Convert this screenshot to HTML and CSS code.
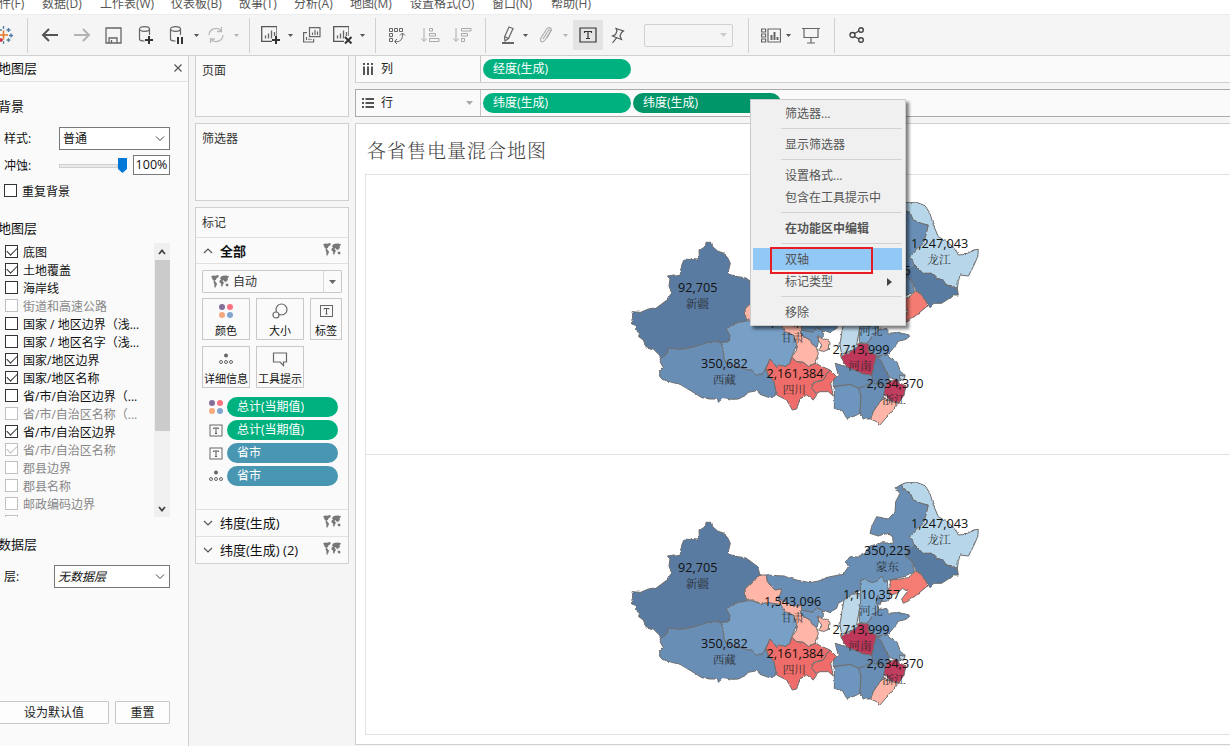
FILE: index.html
```html
<!DOCTYPE html>
<html lang="zh-CN">
<head>
<meta charset="utf-8">
<title>各省售电量混合地图</title>
<link rel="stylesheet" href="styles.css">
</head>
<body>
<svg class="defs" width="0" height="0" aria-hidden="true">
  <defs>
    <filter id="coast" x="0" y="0" width="100%" height="100%" color-interpolation-filters="sRGB">
      <feTurbulence type="fractalNoise" baseFrequency="0.06" numOctaves="2" seed="4"/>
      <feDisplacementMap in="SourceGraphic" scale="8" xChannelSelector="R" yChannelSelector="G"/>
    </filter>
    <symbol id="world" viewBox="0 0 18 14">
      <path fill="#777" d="M0 1.500L2 .5 4.500 .8 6.500 0 8 .8 7 2.500 5.500 3.200 5 5 3.500 5.500 5 7.500 6 8.500 5.500 10.500 4.500 12 4.200 13.500 3.500 12 3.300 9 2.500 7 3 6 1.500 4.500 1 2.700zM9 3.500L10 1.500 12 .8 15 .6 18 1.200 17.500 2.500 16.500 3 17 5 15.500 6 15 7.500 14 6.200 13 6.500 12.500 5 11.500 5.500 12.200 7 13 7.500 12 9.500 11 12 10.200 11 10 8.500 8.500 7.500 8.600 5.500 10 4.800zM14.500 9L16.500 8.500 17.500 10 17 11.500 15 11z"/>
    </symbol>
    <symbol id="tbox" viewBox="0 0 13 13"><rect x=".5" y="1" width="12" height="11" fill="none" stroke="#666"/><path d="M4 5V4h5v1M6.500 4v5.500M5.500 9.500h2" fill="none" stroke="#555"/></symbol>
    <symbol id="dots4" viewBox="0 0 16 16"><circle cx="4" cy="4" r="3" fill="#85709a"/><circle cx="12" cy="4" r="3" fill="#fb7380"/><circle cx="4" cy="12" r="3" fill="#f5a87c"/><circle cx="12" cy="12" r="3" fill="#82a5ce"/></symbol>
    <symbol id="detail" viewBox="0 0 14 12"><circle cx="7" cy="2.500" r="2" fill="#666"/><g fill="none" stroke="#666"><circle cx="2" cy="9" r="1.500"/><circle cx="7" cy="9" r="1.500"/><circle cx="12" cy="9" r="1.500"/></g></symbol>
    <symbol id="chart" viewBox="0 0 16 16"><path d="M16 10V.7H.7v14.600H11" fill="none" stroke="#555" stroke-width="1.300"/><path d="M4.500 12.500v-3M7.500 12.500v-5M10.500 12.500v-8M13.500 10V6" stroke="#666" stroke-width="1.300"/></symbol>
    <symbol id="caret" viewBox="0 0 5 3"><path d="M0 0h5L2.500 3z"/></symbol>
    <symbol id="china" viewBox="0 0 1110 720">
      <g filter="url(#coast)" stroke="#6d6d6d" stroke-width="3" stroke-linejoin="round">
        <path fill="#597ba2" d="M258 142L275 142 278 155 293 168 312 175 324 190 331 205 326 225 325 238 355 245 378 249 400 265 413 275 420 300 400 318 383 332 375 342 378 378 345 385 318 402 330 420 328 440 308 443 275 438 240 450 205 460 175 463 147 458 140 478 125 490 113 475 100 462 78 455 70 435 56 425 58 415 47 405 48 395 33 385 38 370 36 350 62 352 85 342 110 338 145 312 154 292 147 272 150 252 142 243 180 238 186 208 193 192 232 195 238 188 237 165 257 152z"/>
        <path fill="#688eb5" d="M147 458L175 463 205 460 240 450 275 438 308 443 305 455 310 470 312 490 320 505 340 512 370 518 395 527 410 538 425 537 438 522 445 540 462 560 468 590 465 603 445 607 420 598 410 587 385 592 375 602 355 612 335 613 310 608 295 622 293 612 270 612 245 608 225 595 200 580 180 568 155 562 125 552 118 530 130 518 120 500 125 490 140 478z"/>
        <path fill="#789fc5" d="M378 378L395 377 425 387 440 380 480 385 495 405 510 410 525 425 530 450 515 487 510 505 495 515 478 510 470 518 462 505 450 492 442 510 438 522 425 537 410 538 395 527 340 512 320 505 312 490 310 470 305 455 308 443 328 440 330 420 318 402 345 385z"/>
        <path fill="#688eb5" d="M438 300L490 303 530 315 570 323 595 318 630 305 670 298 685 275 678 260 690 245 715 246 735 235 745 215 785 203 820 205 818 188 810 175 790 178 775 183 750 175 755 155 770 125 805 132 825 110 827 80 840 55 825 40 845 28 850 45 870 52 880 75 905 85 925 90 918 120 910 145 890 165 868 185 885 210 865 225 858 245 880 262 883 290 850 305 812 315 795 320 785 303 770 320 745 320 735 310 720 320 723 345 695 358 672 375 655 385 650 400 628 412 607 405 590 398 580 412 545 408 540 390 525 395 495 380 473 370 482 355 485 342 465 345 450 330 442 320z"/>
        <path fill="#ffb6a8" d="M420 300L438 300 442 320 450 330 465 345 485 342 482 355 473 370 495 380 525 395 540 390 545 420 570 435 588 455 595 475 585 505 565 515 550 502 530 500 515 487 530 465 530 445 520 420 495 410 480 388 440 382 425 388 400 375 378 375 375 342 400 318z"/>
        <path fill="#7298bf" d="M540 405L580 412 590 398 607 405 610 422 597 430 592 455 585 455 570 435 545 420z"/>
        <path fill="#ffb6a8" d="M595 425L607 428 630 442 628 462 610 470 595 465 605 450 595 435z"/>
        <path fill="#b8d6ea" d="M845 28L865 22 890 22 915 32 930 55 940 90 955 125 980 140 1005 160 1015 180 1040 178 1060 165 1075 163 1073 185 1060 215 1045 243 1020 240 1015 260 1012 280 1000 275 980 270 970 255 950 250 935 235 910 235 890 215 868 187 890 165 910 145 918 120 925 90 905 85 880 75 870 52 850 45z"/>
        <path fill="#587ba1" d="M885 210L910 235 935 235 950 250 970 255 980 270 1000 275 1012 280 1015 300 1000 300 985 312 965 325 945 325 930 338 918 318 905 300 888 287 880 262 858 245 865 225z"/>
        <path fill="#f47c73" d="M888 287L905 300 918 318 920 335 890 360 865 378 850 385 845 372 862 350 848 340 830 355 812 360 808 350 812 315 840 312 865 308z"/>
        <path fill="#80abd0" d="M802 318L805 350 810 365 802 378 785 380 772 390 778 405 755 425 745 445 718 442 718 405 722 380 722 345 720 320 735 310 745 320 770 320 785 303 795 320z"/>
        <path fill="#5f87af" d="M773 360L785 375 780 390 768 385z"/>
        <path fill="#bcd8e9" d="M672 375L695 358 720 355 722 380 718 405 712 440 705 462 665 478 660 450 665 415z"/>
        <path fill="#6b93bb" d="M778 405L800 400 806 415 835 412 868 420 860 432 835 440 820 460 802 480 772 482 748 470 745 445 755 425z"/>
        <path fill="#688eb5" d="M645 505L680 515 715 530 755 540 770 565 755 570 715 580 690 568 640 575 640 555 655 540z"/>
        <path fill="#5b7fa7" d="M765 484L775 484 785 500 798 530 808 548 800 570 792 600 765 580 755 540z"/>
        <path fill="#bd385b" d="M715 445L745 447 745 468 770 482 765 498 755 540 738 538 715 530 680 515 662 485 705 462z"/>
        <path fill="#7298bf" d="M802 480L830 500 840 525 855 545 840 558 810 548 798 530 785 500 772 484z"/>
        <path fill="#6d95bd" d="M643 575L690 568 715 580 723 600 720 655 700 665 680 670 668 648 643 640 643 610z"/>
        <path fill="#688eb5" d="M715 580L755 565 790 570 800 590 780 620 760 650 752 672 730 672 720 655 723 600z"/>
        <path fill="#c13d5f" d="M795 580L805 560 830 552 840 565 858 572 852 600 835 625 812 618 792 595z"/>
        <path fill="#ffb6a8" d="M792 610L812 618 835 625 815 652 795 672 778 692 770 680 752 672 760 650 780 620z"/>
        <path fill="#b8d6ea" d="M838 540L855 545 850 556 840 552z"/>
        <path fill="#ee6c69" d="M450 492L462 505 470 518 478 510 495 515 510 505 515 487 530 500 550 502 565 515 585 505 600 512 630 525 610 555 580 562 578 580 590 600 580 615 560 600 540 612 530 642 517 645 500 615 470 600 468 590 462 560 445 540 438 522z"/>
        <path fill="#ee6c69" d="M630 525L650 545 632 565 640 603 625 590 600 590 590 595 575 580 580 565 610 555z"/>
      </g>
      <g class="num" text-anchor="middle">
        <text x="233" y="291">92,705</text><text x="313" y="519">350,682</text><text x="518" y="394">1,543,096</text><text x="525" y="549">2,161,384</text><text x="959" y="160">1,247,043</text><text x="802" y="240">350,225</text><text x="755" y="372">1,110,357</text><text x="723" y="477">2,713,999</text><text x="825" y="580">2,634,370</text>
      </g>
      <g class="prov" text-anchor="middle">
        <text x="232" y="340">新疆</text><text x="313" y="567">西藏</text><text x="517" y="441">甘肃</text><text x="523" y="597">四川</text><text x="957" y="208">龙江</text><text x="802" y="287">蒙东</text><text x="753" y="421">河北</text><text x="720" y="525">河南</text><text x="822" y="626">浙江</text>
      </g>
    </symbol>
  </defs>
</svg>

<nav class="menubar"><span class="cut">件(F)</span><span>数据(D)</span><span>工作表(W)</span><span>仪表板(B)</span><span>故事(T)</span><span>分析(A)</span><span>地图(M)</span><span>设置格式(O)</span><span>窗口(N)</span><span>帮助(H)</span></nav>

<div class="toolbar">
  <svg width="13" height="18" fill="none" stroke-width="1.300"><path stroke="#e8762c" stroke-width="1.600" d="M-1 9h9M3.500 4.500v9"/><path stroke="#4e79a7" d="M6.500 4h4M8.500 2v4M9 9.500h4M11 7.500v4M3.500 0v3"/><path stroke="#c72035" d="M-1 14h4M1 12v4"/><path stroke="#59879b" d="M6.500 14h4M8.500 12v4M-1 4h3M3.500 15v3"/></svg>
  <i class="sep"></i>
  <svg width="18" height="14" fill="none" stroke="#555" stroke-width="2"><path d="M17 7H2M8 1L2 7l6 6"/></svg>
  <svg width="18" height="14" fill="none" stroke="#b3b3b3" stroke-width="2"><path d="M1 7h15M10 1l6 6-6 6"/></svg>
  <svg width="17" height="17" fill="none" stroke="#666" stroke-width="1.300"><path d="M1 1h15v15H1zM4 16v-5h8v5M6.500 16v-3"/></svg>
  <svg width="16" height="18" fill="none" stroke="#666" stroke-width="1.200"><ellipse cx="6.500" cy="3" rx="5" ry="2.300"/><path d="M1.500 3v10c0 1 2 2 5 2M11.500 3v6"/><path stroke="#333" stroke-width="2" d="M7 14h8M11 10v8"/></svg>
  <svg width="16" height="18" fill="none" stroke="#666" stroke-width="1.200"><ellipse cx="6.500" cy="3" rx="5" ry="2.300"/><path d="M1.500 3v10c0 1 2 2 5 2M11.500 3v6"/><path stroke="#333" stroke-width="2" d="M9 11v7M13 11v7"/></svg>
  <svg class="caret"><use href="#caret"/></svg>
  <svg width="18" height="16" fill="none" stroke="#b9b9b9" stroke-width="1.300"><path d="M2 8a7 7 0 0 1 12-4.500M16 8a7 7 0 0 1-12 4.500M14.500 0v4.500H10M3.500 16v-4H8"/></svg>
  <svg class="caret dim"><use href="#caret"/></svg>
  <i class="sep"></i>
  <svg width="20" height="18"><use href="#chart" x="1" y="0" width="16" height="16"/><path stroke="#333" stroke-width="2" d="M12 14h8M16 10v8"/></svg>
  <svg class="caret"><use href="#caret"/></svg>
  <svg width="18" height="16" fill="none" stroke="#666" stroke-width="1.200"><path d="M6.500.6h10.500v9H6.500zM4 5.600H.6V15h10v-3M3.500 13v-3M6 13v-1.500M8 13v-1M9.500 8V5.500M12 8V3M14.500 8V4.500"/></svg>
  <svg width="20" height="18"><use href="#chart" x="0" y="0" width="16" height="16"/><path stroke="#333" stroke-width="2" d="M12 11l6.500 6.500M18.500 11L12 17.500"/></svg>
  <svg class="caret"><use href="#caret"/></svg>
  <i class="sep"></i>
  <svg width="18" height="17" fill="none" stroke="#666"><path d="M1.500 1.500h3v3h-3zM6.500 1.500h3v3h-3zM11.500 1.500h3v3h-3zM1.500 6.500h3v3h-3zM1.500 11.500h3v3h-3zM7 14.500c5 1 8-2 7.500-8M12 8.500l2.500-2.500L17 8.500M9 12l-2.500 2.500L9 17"/></svg>
  <svg width="19" height="16" fill="none" stroke="#aaa"><path d="M3 1v13M.5 11.500L3 14.500l2.500-3M8.500 1.500h3v2.500h-3zM8.500 6.500h6v2.500h-6zM8.500 11.500h9.500v3H8.500z"/></svg>
  <svg width="19" height="16" fill="none" stroke="#aaa"><path d="M3 1v13M.5 11.500L3 14.500l2.500-3M8.500 1.500H18V4H8.500zM8.500 6.500h6v2.500h-6zM8.500 11.500h3v3h-3z"/></svg>
  <i class="sep"></i>
  <svg width="15" height="18" fill="none" stroke="#666" stroke-width="1.200"><path d="M8 1l4 1.500-4.500 10L4 15l-.5-4zM3.500 10.500l4 2M6 4"/><path d="M1 17h12" stroke-width="2"/></svg>
  <svg class="caret"><use href="#caret"/></svg>
  <svg width="15" height="16" fill="none" stroke="#b0b0b0" stroke-width="1.200"><path d="M5 12l5-8c1-2 3-1 2 1L7 13c-2 3-6 2-4-2l5-8c2-4 7-2 5 1l-4 7"/></svg>
  <svg class="caret dim"><use href="#caret"/></svg>
  <span class="toggle"><svg width="18" height="16" fill="none" stroke="#333" stroke-width="1.200"><path d="M1 1h16v14H1zM5.500 6V4.500h7V6M9 4.500v7M7 11.500h4"/></svg></span>
  <svg width="14" height="17" fill="none" stroke="#555" stroke-width="1.200"><path d="M5 1.500L12.500 4 10.500 5.500 9 9l1.500 3.500L1.500 9 4.500 7.500 6 4zM5.500 10.800L1.500 16"/></svg>
  <span class="combo"><svg width="7" height="4" fill="#ccc"><path d="M0 0h7L3.500 4z"/></svg></span>
  <i class="sep"></i>
  <svg width="20" height="15" fill="none" stroke="#666" stroke-width="1.200"><path d="M.6 1h4v3h-4zM.6 6h4v3h-4zM.6 11h4v3h-4zM7 1h12.500v13H7z"/><path stroke-width="2" d="M10.500 12V7M13.500 12V4M16.500 12V9"/></svg>
  <svg class="caret"><use href="#caret"/></svg>
  <svg width="18" height="17" fill="none" stroke="#666" stroke-width="1.200"><path d="M0 1.500h18M2 2v8.500h14V2M9 10.500V16M5 16h8"/></svg>
  <i class="sep"></i>
  <svg width="16" height="16" fill="none" stroke="#444" stroke-width="1.400"><circle cx="3.500" cy="8" r="2.500"/><circle cx="12" cy="3" r="2.300"/><circle cx="12" cy="13" r="2.300"/><path d="M5.500 6.500l4.500-2.500M5.500 9.500l4.500 2.500"/></svg>
</div>

<div class="main">
  <aside class="layers">
    <div class="layers-head"><b>地图层</b><svg width="8" height="8" stroke="#555" stroke-width="1.200"><path d="M.5.500l7 7M7.500.500l-7 7"/></svg></div>
    <h2 class="h-bg">背景</h2>
    <div class="field"><label>样式:</label><span class="select w111">普通<svg width="10" height="6" fill="none" stroke="#444"><path d="M1 .5l4 4 4-4"/></svg></span></div>
    <div class="field erode"><label>冲蚀:</label><span class="track"></span><svg class="thumb" width="9" height="15"><path fill="#0078d7" d="M0 0h9v11l-4.500 4L0 11z"/></svg><span class="pct">100%</span></div>
    <div class="check repeat"><i class="box"></i><span>重复背景</span></div>
    <h2 class="h-layer">地图层</h2>
    <div class="list">
      <div class="rows">
        <div class="check"><i class="box on"></i><span>底图</span></div>
        <div class="check"><i class="box on"></i><span>土地覆盖</span></div>
        <div class="check"><i class="box"></i><span>海岸线</span></div>
        <div class="check off"><i class="box"></i><span>街道和高速公路</span></div>
        <div class="check"><i class="box"></i><span>国家 / 地区边界（浅...</span></div>
        <div class="check"><i class="box"></i><span>国家 / 地区名字（浅...</span></div>
        <div class="check"><i class="box on"></i><span>国家/地区边界</span></div>
        <div class="check"><i class="box on"></i><span>国家/地区名称</span></div>
        <div class="check"><i class="box"></i><span>省/市/自治区边界（...</span></div>
        <div class="check off"><i class="box"></i><span>省/市/自治区名称（...</span></div>
        <div class="check"><i class="box on"></i><span>省/市/自治区边界</span></div>
        <div class="check off"><i class="box on"></i><span>省/市/自治区名称</span></div>
        <div class="check off"><i class="box"></i><span>郡县边界</span></div>
        <div class="check off"><i class="box"></i><span>郡县名称</span></div>
        <div class="check off"><i class="box"></i><span>邮政编码边界</span></div>
        <div class="check off"><i class="box"></i></div>
      </div>
      <div class="scroll"><svg width="8" height="6" fill="none" stroke="#444" stroke-width="1.800"><path d="M1 5l3-3.500L7 5"/></svg><i></i><svg width="8" height="6" fill="none" stroke="#444" stroke-width="1.800"><path d="M1 1l3 3.500L7 1"/></svg></div>
    </div>
    <h2 class="h-data">数据层</h2>
    <div class="field"><label class="short">层:</label><span class="select w116"><em>无数据层</em><svg width="10" height="6" fill="none" stroke="#444"><path d="M1 .5l4 4 4-4"/></svg></span></div>
    <div class="actions"><button class="default">设为默认值</button><button class="reset">重置</button></div>
  </aside>

  <section class="cards">
    <div class="card pages">页面</div>
    <div class="card filters">筛选器</div>
    <div class="card marks">
      <div class="marks-title">标记</div>
      <div class="mark-row all"><svg width="10" height="6" fill="none" stroke="#555" stroke-width="1.200"><path d="M1 5l4-4 4 4"/></svg><b>全部</b><svg class="world" width="18" height="14"><use href="#world"/></svg></div>
      <div class="mark-type"><svg width="18" height="14"><use href="#world"/></svg><span>自动</span><i><svg width="7" height="4" fill="#666"><path d="M0 0h7L3.500 4z"/></svg></i></div>
      <div class="mark-btns">
        <div><svg width="16" height="16"><use href="#dots4"/></svg>颜色</div>
        <div><svg width="16" height="16" fill="none" stroke="#666" stroke-width="1.200"><circle cx="9.500" cy="6.500" r="5.500"/><circle cx="4" cy="12" r="3" fill="#fafafa"/></svg>大小</div>
        <div><svg width="13" height="16"><use href="#tbox"/></svg>标签</div>
        <div><svg width="14" height="16"><use href="#detail"/></svg>详细信息</div>
        <div><svg width="16" height="16" fill="none" stroke="#666" stroke-width="1.200"><path d="M1.500 2h13v9h-3v3.500L8 11H1.500z"/></svg>工具提示</div>
      </div>
      <div class="encodings">
        <div><svg width="16" height="16"><use href="#dots4"/></svg><span class="pill green">总计(当期值)</span></div>
        <div><svg width="16" height="13"><use href="#tbox"/></svg><span class="pill green">总计(当期值)</span></div>
        <div><svg width="16" height="13"><use href="#tbox"/></svg><span class="pill blue">省市</span></div>
        <div><svg width="16" height="12"><use href="#detail"/></svg><span class="pill blue">省市</span></div>
      </div>
      <div class="mark-row lat"><svg width="10" height="6" fill="none" stroke="#555" stroke-width="1.200"><path d="M1 1l4 4 4-4"/></svg><span>纬度(生成)</span><svg class="world" width="18" height="14"><use href="#world"/></svg></div>
      <div class="mark-row lat"><svg width="10" height="6" fill="none" stroke="#555" stroke-width="1.200"><path d="M1 1l4 4 4-4"/></svg><span>纬度(生成) (2)</span><svg class="world" width="18" height="14"><use href="#world"/></svg></div>
    </div>
  </section>

  <section class="work">
    <div class="shelf cols"><div class="shelf-name"><svg width="12" height="12" stroke="#555" stroke-width="2"><path d="M2 0v2M6 0v2M10 0v2M2 3.500V12M6 3.500V12M10 3.500V12"/></svg>列</div><span class="pill green">经度(生成)</span></div>
    <div class="shelf rows-shelf"><div class="shelf-name"><svg width="12" height="12" stroke="#555" stroke-width="2"><path d="M0 2h2M0 6h2M0 10h2M3.500 2H12M3.500 6H12M3.500 10H12"/></svg>行<svg class="drop" width="7" height="4" fill="#aaa"><path d="M0 0h7L3.500 4z"/></svg></div><span class="pill green">纬度(生成)</span><span class="pill dark">纬度(生成)</span></div>
    <div class="viz">
      <h1>各省售电量混合地图</h1>
      <div class="panes">
        <div class="pane"><svg width="370" height="240"><use href="#china"/></svg></div>
        <div class="pane"><svg width="370" height="240"><use href="#china"/></svg></div>
      </div>
    </div>
  </section>
</div>

<div class="menu">
  <div>筛选器...</div><hr>
  <div>显示筛选器</div><hr>
  <div>设置格式...</div>
  <div>包含在工具提示中</div><hr>
  <div class="bold">在功能区中编辑</div><hr>
  <div class="active">双轴</div>
  <div>标记类型<svg width="5" height="8" fill="#444"><path d="M0 0l5 4-5 4z"/></svg></div><hr>
  <div>移除</div>
  <span class="frame"></span>
</div>
</body>
</html>
```
FILE: styles.css
```css
* { box-sizing: border-box; }
body { margin: 0; width: 1230px; height: 746px; overflow: hidden; position: relative; background: #f5f5f5; color: #222; font: 12px/18px "Open Sans", "Noto Sans CJK SC", sans-serif; white-space: nowrap; }
svg { display: block; flex: none; }
i { font-style: normal; }
.defs { position: absolute; }

.menubar { height: 14px; background: #fff; color: #555; display: grid; grid-template-columns: 42px 58px 71px 68px 55px 56px 60px 82px 59px 60px; line-height: 18px; }
.menubar span { margin-top: -5px; }
.menubar .cut { margin-left: -1px; }

.toolbar { height: 42px; border-top: 1px solid #ececec; border-bottom: 1px solid #d0d0d0; display: grid; align-items: center; grid-template-columns: 27px 14px 32px 32px 33px 31px 25px 13px 27px 15px 11px 28px 15px 30px 27px 15px 13px 33px 32px 32px 16px 22px 15px 25px 10px 38px 33px 104px 13px 25px 16px 32px 15px 40px; }
.sep { width: 1px; height: 35px; background: #d0d0d0; }
.caret { width: 5px; height: 3px; fill: #555; }
.caret.dim { fill: #b5b5b5; }
.toggle { width: 30px; height: 30px; background: #e4e4e4; display: grid; place-items: center; }
.combo { width: 89px; height: 23px; border: 1px solid #d0d0d0; border-radius: 2px; display: flex; align-items: center; justify-content: flex-end; padding-right: 5px; }

.main { display: grid; grid-template-columns: 189px 166px 875px; height: 690px; }

.layers { background: #fafafa; border-right: 1px solid #d0d0d0; display: flex; flex-direction: column; color: #111; }
.layers-head { height: 26px; flex: none; border-bottom: 1px solid #e2e2e2; display: flex; align-items: center; justify-content: space-between; padding: 0 6px 1px 0; }
.layers-head b, .layers h2 { font-weight: normal; font-size: 13px; margin: 0 0 0 -2px; }
.layers h2 { flex: none; display: flex; align-items: center; }
.h-bg { height: 45px; padding-top: 2px; }
.h-layer { height: 43px; padding-top: 12px; }
.h-data { height: 47px; padding-top: 4px; }
.field { height: 23px; flex: none; display: flex; align-items: center; padding-left: 4px; }
.field label { width: 55px; }
.field .short { width: 50px; }
.select { height: 23px; background: #fff; border: 1px solid #777; display: flex; align-items: center; justify-content: space-between; padding: 0 4px 0 3px; }
.w111 { width: 111px; }
.w116 { width: 116px; }
.erode { margin-top: 5px; height: 21px; }
.track { width: 59px; height: 4px; background: #e7eaea; border: 1px solid #d0d0d0; }
.pct { width: 37px; height: 20px; margin: -1px 0 0 6px; border: 1px solid #777; background: #fff; line-height: 18px; text-align: center; font-size: 12.500px; }
.check { height: 18px; flex: none; display: flex; align-items: center; gap: 5px; padding-left: 5px; }
.check span { padding-top: 2px; }
.repeat { margin-top: 6px; padding-left: 4px; height: 18px; }
.box { width: 13px; height: 13px; margin-bottom: 2px; border: 1px solid #333; background: #fff; }
.box.on::after { content: ""; display: block; width: 9px; height: 5px; margin: 1px 0 0 1px; border-left: 1.300px solid #333; border-bottom: 1.300px solid #333; transform: rotate(-45deg); }
.off { color: #888; }
.off .box, .off .box.on::after { border-color: #c0c0c0; }
.list { height: 275px; flex: none; display: flex; justify-content: space-between; }
.rows { height: 274px; overflow: hidden; }
.scroll { width: 16px; height: 274px; margin-right: 18px; background: #f0f0f0; display: flex; flex-direction: column; align-items: center; padding: 6px 0 5px; }
.scroll i { width: 15px; height: 171px; background: #cbcbcb; margin: 5px 0 auto; flex: none; }
.actions { display: flex; gap: 6px; margin-top: 113px; }
.actions button { height: 23px; padding: 0; border: 1px solid #c8c8c8; border-radius: 1px; background: #fdfdfd; color: #222; font: inherit; }
.default { width: 110px; margin-left: -1px; }
.reset { width: 55px; }

.cards { padding-left: 6px; width: 160px; }
.card { background: #fafafa; border: 1px solid #d0d0d0; padding: 6px; color: #333; }
.pages { height: 61px; border-top: 0; }
.filters { height: 78px; margin-top: 6px; }
.marks { height: 357px; margin-top: 6px; padding: 0; }
.marks-title { height: 30px; padding: 6px; border-bottom: 1px solid #e0e0e0; }
.mark-row { height: 27px; border-bottom: 1px solid #e0e0e0; display: flex; align-items: center; gap: 6px; padding: 0 7px; color: #111; }
.mark-row b, .mark-row span { font-size: 13px; margin-left: 1px; }
.mark-row.all { height: 26px; }
.mark-row.lat:last-child { border-bottom: 0; height: 26px; }
.world { margin: -2px 0 0 auto; }
.mark-type { margin: 6px 6px 5px; height: 23px; border: 1px solid #c8c8c8; border-radius: 1px; display: flex; align-items: center; padding-left: 8px; gap: 4px; }
.mark-type i { width: 18px; height: 21px; margin-left: auto; border-left: 1px solid #d8d8d8; display: grid; place-items: center; }
.mark-btns { display: grid; grid-template-columns: 48px 48px 32px; gap: 6px; padding: 0 6px; font-size: 11px; }
.mark-btns div { height: 42px; border: 1px solid #c8c8c8; display: flex; flex-direction: column; align-items: center; padding-top: 4px; gap: 3px; color: #111; line-height: 18px; }
.encodings { height: 122px; border-bottom: 1px solid #e0e0e0; padding: 9px 10px 0 12px; display: flex; flex-direction: column; gap: 3px; }
.encodings div { height: 20px; display: flex; align-items: center; gap: 3px; }
.encodings .pill { width: 111px; }
.pill { height: 20px; border-radius: 10px; color: #fff; line-height: 19px; padding-left: 10px; font-size: 12px; }
.green { background: #00b180; }
.blue { background: #4996b2; }
.dark { background: #009669; }

.shelf { height: 27px; background: #fafafa; border: 1px solid #d0d0d0; border-right: 0; display: flex; align-items: center; gap: 2px; }
.shelf .pill { width: 148px; }
.cols { border-top: 0; }
.rows-shelf { height: 28px; margin-top: 6px; border-color: #aaa; }
.shelf-name { width: 125px; height: 100%; border-right: 1px solid #c4c4c4; display: flex; align-items: center; gap: 7px; padding: 0 6px; }
.drop { margin-left: auto; margin-right: 1px; }
.viz { height: 622px; margin-top: 6px; background: #fff; border: 1px solid #d0d0d0; border-right: 0; padding-left: 9px; }
.viz h1 { margin: 0; height: 50px; line-height: 51px; padding-left: 2px; font-weight: 300; font-size: 19px; letter-spacing: 1px; color: #444; font-family: "Noto Serif CJK SC", "Noto Sans CJK SC", serif; }
.panes { border: 1px solid #e2e2e2; border-right: 0; height: 561px; }
.pane { height: 279px; padding: 20px 0 0 254px; }
.pane + .pane { height: 280px; border-top: 1px solid #e2e2e2; }
.num { font-size: 38px; fill: #111; }
.prov { font-size: 35px; fill: #222; font-weight: 300; font-family: "Noto Serif CJK SC", "Noto Sans CJK SC", serif; }

.menu { position: absolute; left: 750px; top: 99px; width: 156px; height: 227px; background: #f0f0f0; border: 1px solid #ccc; box-shadow: 3px 3px 3px rgba(0,0,0,.5); padding: 2px 3px 0 2px; color: #555; }
.menu div { height: 22px; line-height: 22px; padding: 2px 10px 0 32px; display: flex; align-items: center; justify-content: space-between; }
.menu hr { height: 1px; border: 0; background: #d2d2d2; margin: 4px 0 4px 28px; }
.menu .active { background: #91c8f6; }
.menu .bold { font-weight: bold; }
.frame { position: absolute; left: 19px; top: 147px; width: 103px; height: 27px; border: 2px solid #e81c24; }
```
